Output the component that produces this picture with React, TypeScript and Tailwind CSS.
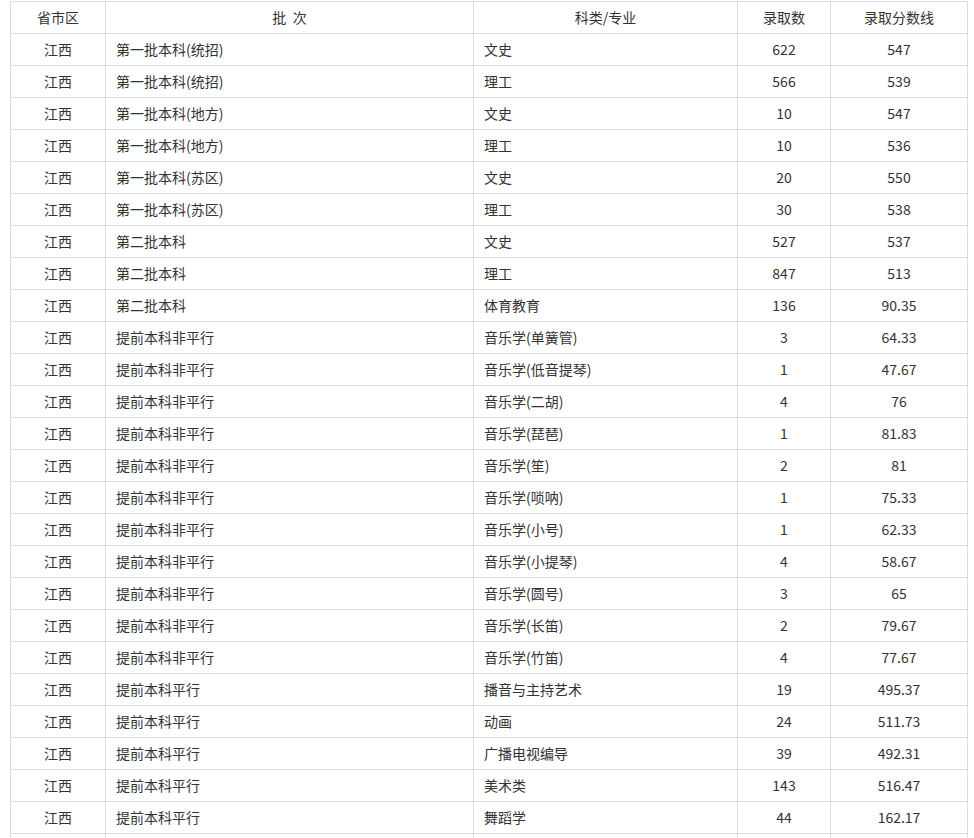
const rows: [string, string, string, string, string][] = [
  ["江西", "第一批本科(统招)", "文史", "622", "547"],
  ["江西", "第一批本科(统招)", "理工", "566", "539"],
  ["江西", "第一批本科(地方)", "文史", "10", "547"],
  ["江西", "第一批本科(地方)", "理工", "10", "536"],
  ["江西", "第一批本科(苏区)", "文史", "20", "550"],
  ["江西", "第一批本科(苏区)", "理工", "30", "538"],
  ["江西", "第二批本科", "文史", "527", "537"],
  ["江西", "第二批本科", "理工", "847", "513"],
  ["江西", "第二批本科", "体育教育", "136", "90.35"],
  ["江西", "提前本科非平行", "音乐学(单簧管)", "3", "64.33"],
  ["江西", "提前本科非平行", "音乐学(低音提琴)", "1", "47.67"],
  ["江西", "提前本科非平行", "音乐学(二胡)", "4", "76"],
  ["江西", "提前本科非平行", "音乐学(琵琶)", "1", "81.83"],
  ["江西", "提前本科非平行", "音乐学(笙)", "2", "81"],
  ["江西", "提前本科非平行", "音乐学(唢呐)", "1", "75.33"],
  ["江西", "提前本科非平行", "音乐学(小号)", "1", "62.33"],
  ["江西", "提前本科非平行", "音乐学(小提琴)", "4", "58.67"],
  ["江西", "提前本科非平行", "音乐学(圆号)", "3", "65"],
  ["江西", "提前本科非平行", "音乐学(长笛)", "2", "79.67"],
  ["江西", "提前本科非平行", "音乐学(竹笛)", "4", "77.67"],
  ["江西", "提前本科平行", "播音与主持艺术", "19", "495.37"],
  ["江西", "提前本科平行", "动画", "24", "511.73"],
  ["江西", "提前本科平行", "广播电视编导", "39", "492.31"],
  ["江西", "提前本科平行", "美术类", "143", "516.47"],
  ["江西", "提前本科平行", "舞蹈学", "44", "162.17"],
  // next row only shows its top border at the bottom edge
  ["", "", "", "", ""],
];

const cell = "border border-[#dcdcdc] h-[32px] p-0 align-middle";

export default function App() {
  return (
    <div className="bg-white w-[974px] h-[838px] overflow-hidden pl-[10px] pt-[1px] font-['Microsoft_YaHei','Noto_Sans_CJK_SC',sans-serif] text-[14px] text-[#333]">
      <table className="border-collapse table-fixed w-[957px]">
        <colgroup>
          <col className="w-[95px]" />
          <col className="w-[368px]" />
          <col className="w-[264px]" />
          <col className="w-[93px]" />
          <col className="w-[137px]" />
        </colgroup>
        <thead>
          <tr>
            <th className={`${cell} font-normal text-center`}>省市区</th>
            <th className={`${cell} font-normal text-center`}>批&nbsp;&nbsp;次</th>
            <th className={`${cell} font-normal text-center`}>科类/专业</th>
            <th className={`${cell} font-normal text-center`}>录取数</th>
            <th className={`${cell} font-normal text-center`}>录取分数线</th>
          </tr>
        </thead>
        <tbody>
          {rows.map((r, i) => (
            <tr key={i}>
              <td className={`${cell} text-center`}>{r[0]}</td>
              <td className={`${cell} pl-[10px]`}>{r[1]}</td>
              <td className={`${cell} pl-[10px]`}>{r[2]}</td>
              <td className={`${cell} text-center`}>{r[3]}</td>
              <td className={`${cell} text-center`}>{r[4]}</td>
            </tr>
          ))}
        </tbody>
      </table>
    </div>
  );
}
